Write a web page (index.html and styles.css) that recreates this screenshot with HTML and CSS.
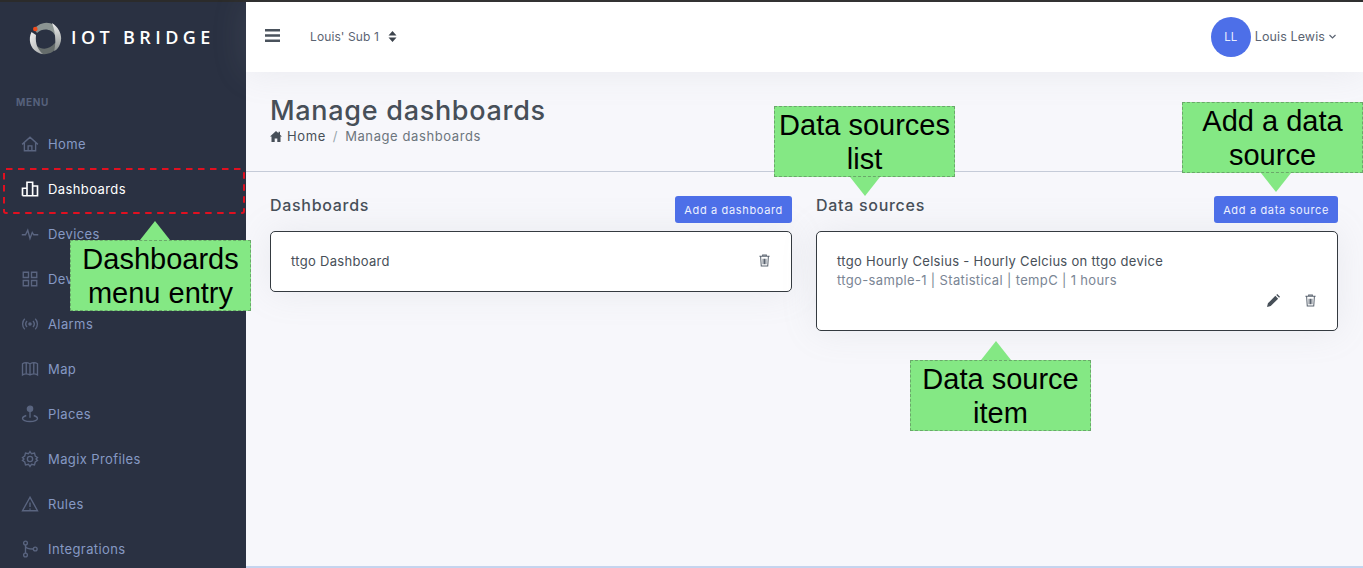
FILE: index.html
```html
<!DOCTYPE html>
<html lang="en">
<head>
  <meta charset="UTF-8" />
  <meta name="viewport" content="width=device-width, initial-scale=1.0"/>
  <title>Manage dashboards</title>
  <link rel="stylesheet" href="styles.css">
</head>
<body>

<div class="app">

  <aside class="sidebar">
    <div class="logo">
      <svg width="34" height="34" viewBox="0 0 34 34">
        <defs>
          <linearGradient id="ringRight" x1="0" y1="0" x2="0" y2="1">
            <stop offset="0" stop-color="#eeeeee"/>
            <stop offset="1" stop-color="#8a908e"/>
          </linearGradient>
          <linearGradient id="ringLeft" x1="0" y1="0" x2="1" y2="1">
            <stop offset="0" stop-color="#f2f2f2"/>
            <stop offset="1" stop-color="#a5a8a8"/>
          </linearGradient>
        </defs>
        <path d="M6 8C12 1 20 0 26 4 28 8 28 11 27 14 24 8 15 6 9 12Z" fill="#8b9492"/>
        <path d="M9 25C14 29 21 29 27 22 31 22 31 23 31 24 27 31 20 34 14 33 11 32 9 29 9 25Z" fill="#656c6b"/>
        <path d="M3.500 11C0 18 2 27 9 31 11 32 13 33 15 33 10 29 7 23 8 14Z" fill="url(#ringLeft)"/>
        <path d="M24 2C32 7 35 16 32 23 31 26 29 29 26 30 28 24 28 12 24 2Z" fill="url(#ringRight)"/>
        <circle cx="7.300" cy="8" r="2.300" fill="#f04a1a"/>
      </svg>
      <span class="logo-text">IOT BRIDGE</span>
    </div>

    <div class="menu-title">MENU</div>

    <ul class="menu">
      <li>
        <svg class="menu-icon" viewBox="0 0 24 24"><path d="M1.500 12.500 12 3l10.500 9.500M4.500 10.500V21h15V10.500M9.500 21v-6.500h5V21"/></svg>
        Home
      </li>
      <li class="active">
        <svg class="menu-icon" viewBox="0 0 24 24"><path d="M2 21V11h6v10M8 21V3h7.500v18M15.500 21V8H22v13zM2 21h20"/></svg>
        Dashboards
      </li>
      <li>
        <svg class="menu-icon" viewBox="0 0 24 24"><path d="M1 13h5l3-6 3 11 3-8 2 3h6"/></svg>
        Devices
      </li>
      <li>
        <svg class="menu-icon" viewBox="0 0 24 24"><path d="M3 3h7v7H3zM14 3h7v7h-7zM3 14h7v7H3zM14 14h7v7h-7z"/></svg>
        Dev
      </li>
      <li>
        <svg class="menu-icon" viewBox="0 0 24 24"><path d="M5 5a10 10 0 0 0 0 14M19 5a10 10 0 0 1 0 14M8 8a6 6 0 0 0 0 8M16 8a6 6 0 0 1 0 8"/><circle class="solid" cx="12" cy="12" r="1.500"/></svg>
        Alarms
      </li>
      <li>
        <svg class="menu-icon" viewBox="0 0 24 24"><path d="M2 5c3-2 6-2 10 0 4-2 7-2 10 0v15c-3-2-6-2-10 0-4-2-7-2-10 0zM12 5v15M7 4v15M17 4v15"/></svg>
        Map
      </li>
      <li>
        <svg class="menu-icon" viewBox="0 0 24 24"><circle class="solid" cx="12" cy="5" r="3.500"/><path d="M12 8v9M7 14c-3 1-5 2.500-5 4 0 2 4 4 10 4s10-2 10-4c0-1.500-2-3-5-4"/></svg>
        Places
      </li>
      <li>
        <svg class="menu-icon" viewBox="0 0 24 24"><path d="M12 2l2 3 4-1 1 4 3 2-2 2 2 2-3 2-1 4-4-1-2 3-2-3-4 1-1-4-3-2 2-2-2-2 3-2 1-4 4 1z"/><circle cx="12" cy="12" r="3.500"/></svg>
        Magix Profiles
      </li>
      <li>
        <svg class="menu-icon" viewBox="0 0 24 24"><path d="M12 3 2 21h20zM12 10v6M12 18v1.500"/></svg>
        Rules
      </li>
      <li>
        <svg class="menu-icon" viewBox="0 0 24 24"><circle cx="6" cy="4" r="2.500"/><circle cx="6" cy="20" r="2.500"/><circle cx="19" cy="12" r="2.500"/><path d="M6 6.500v11M6 8c0 3 3 4 10.500 4"/></svg>
        Integrations
      </li>
    </ul>
  </aside>

  <div class="content">

    <header class="topbar">
      <svg class="burger" width="15" height="13" viewBox="0 0 15 13"><path d="M0 1.200h15M0 6.500h15M0 11.800h15"/></svg>
      <div class="sub-select">
        Louis' Sub 1
        <svg width="9" height="11" viewBox="0 0 9 11"><path d="M4.500 0 8.500 4.500h-8zM4.500 11 .5 6.500h8z"/></svg>
      </div>
      <div class="user">
        <div class="avatar">LL</div>
        <span class="user-name">Louis Lewis</span>
        <svg class="caret" width="7" height="5" viewBox="0 0 7 5"><path d="M.5 1l3 3 3-3"/></svg>
      </div>
    </header>

    <section class="page-title">
      <h1>Manage dashboards</h1>
      <div class="breadcrumb">
        <svg width="12" height="11" viewBox="0 0 12 11"><path d="M6 0 0 5.500h1.500V11h3.200V7.500h2.600V11h3.200V5.500H12L10 3.700V.7H8.500v1.600z"/></svg>
        <span class="crumb">Home</span>
        <span class="sep">/</span>
        <span class="crumb-current">Manage dashboards</span>
      </div>
    </section>

    <main class="columns">
      <section>
        <div class="col-head">
          <h2>Dashboards</h2>
          <button class="btn">Add a dashboard</button>
        </div>
        <div class="card card-row">
          <div class="item-name">ttgo Dashboard</div>
          <svg class="action" viewBox="0 0 14 14"><path class="trash" d="M1.500 2.500h11M5 2.500V1h4v1.500M2.800 2.500l.7 10.500h7l.7-10.500M5.500 5v6M7 5v6M8.500 5v6"/></svg>
        </div>
      </section>
      <section>
        <div class="col-head">
          <h2>Data sources</h2>
          <button class="btn">Add a data source</button>
        </div>
        <div class="card">
          <div class="item-name">ttgo Hourly Celsius - Hourly Celcius on ttgo device</div>
          <div class="item-sub">ttgo-sample-1 | Statistical | tempC | 1 hours</div>
          <div class="item-actions">
            <svg class="action" viewBox="0 0 14 14"><path class="pencil" d="M0 14l1-4 8-8 3 3-8 8zM10 1l1-1 3 3-1 1z"/></svg>
            <svg class="action" viewBox="0 0 14 14"><path class="trash" d="M1.500 2.500h11M5 2.500V1h4v1.500M2.800 2.500l.7 10.500h7l.7-10.500M5.500 5v6M7 5v6M8.500 5v6"/></svg>
          </div>
        </div>
      </section>
    </main>

  </div>
</div>

<!-- Annotations over the screenshot -->
<svg class="highlight" width="242" height="46" viewBox="0 0 242 46"><rect x="1" y="1" width="240" height="44" rx="2"/></svg>

<div class="callout callout-menu">Dashboards menu entry</div>
<div class="callout callout-list">Data sources list</div>
<div class="callout callout-add">Add a data source</div>
<div class="callout callout-item">Data source item</div>

</body>
</html>
```

FILE: styles.css
```css
body {
  font-family: Inter, 'Noto Sans', sans-serif;
  margin: 0;
  padding: 0;
  height: 568px;
  overflow: hidden;
  position: relative;
  background: #f7f7fb;
}
.app {
  display: flex;
  height: 566px;
  border-top: 2px solid #2b2b2b;
}

/* Sidebar */
.sidebar {
  width: 246px;
  flex: none;
  background: #2a3142;
  overflow: hidden;
}
.logo {
  display: flex;
  align-items: center;
  gap: 9px;
  padding: 19px 0 0 28px;
}
.logo-text {
  color: #fff;
  font-family: 'Open Sans', sans-serif;
  font-weight: 600;
  font-size: 18px;
  letter-spacing: 4.4px;
  margin-bottom: 2px;
}
.menu-title {
  color: #56617c;
  font-size: 10px;
  font-weight: 700;
  letter-spacing: .7px;
  margin: 41px 0 0 16px;
}
.menu {
  list-style: none;
  margin: 13px 0 0;
  padding: 0;
}
.menu li {
  height: 45px;
  display: flex;
  align-items: center;
  gap: 9px;
  padding-left: 21px;
  font-size: 13px;
  letter-spacing: .4px;
  color: #8699c4;
}
.menu li.active {
  color: #fff;
}
.menu-icon {
  width: 18px;
  height: 18px;
  fill: none;
  stroke: #5a6580;
  stroke-width: 1.8;
}
.menu-icon .solid {
  fill: #5a6580;
}
.active .menu-icon {
  stroke: #fff;
  stroke-width: 2.2;
}

/* Top bar */
.content {
  flex: 1;
  min-width: 0;
  border-bottom: 2px solid #c5d4ee;
}
.topbar {
  height: 70px;
  background: #fff;
  display: flex;
  align-items: center;
  padding: 0 27px 0 19px;
  box-shadow: 0 0 35px rgba(154,161,171,.15);
  font-size: 12px;
  color: #5b6472;
}
.burger {
  fill: none;
  stroke: #4a525c;
  stroke-width: 2.4;
  margin-bottom: 3px;
}
.sub-select {
  margin-left: 30px;
  margin-bottom: 2px;
  display: flex;
  align-items: center;
  gap: 9px;
  letter-spacing: .1px;
}
.sub-select svg {
  fill: #3c434c;
}
.user {
  margin-left: auto;
  display: flex;
  align-items: center;
  gap: 4px;
}
.avatar {
  width: 40px;
  height: 40px;
  border-radius: 50%;
  background: #4d6fe8;
  color: #e8edff;
  display: flex;
  align-items: center;
  justify-content: center;
  font-size: 11.500px;
}
.user-name {
  font-size: 12.500px;
  letter-spacing: .1px;
  margin-bottom: 2px;
}
.caret {
  fill: none;
  stroke: #5b6472;
  stroke-width: 1.2;
  margin-bottom: 2px;
}

/* Page title */
.page-title {
  padding: 24px 24px 0;
  height: 75px;
  border-bottom: 1px solid #c5cbd8;
}
h1 {
  margin: 0;
  font-size: 27px;
  font-weight: 500;
  line-height: 30px;
  letter-spacing: .7px;
  color: #474f58;
}
.breadcrumb {
  display: flex;
  align-items: center;
  gap: 5px;
  font-size: 13px;
  letter-spacing: .6px;
  color: #474f58;
  margin-top: 2px;
}
.breadcrumb svg {
  fill: #474f58;
}
.sep {
  color: #98a6ad;
  margin: 0 2px;
}
.crumb-current {
  color: #6c757d;
}

/* Dashboards and data sources */
.columns {
  display: grid;
  grid-template-columns: 1fr 1fr;
  gap: 24px;
  padding: 24px 25px 0 24px;
}
.col-head {
  display: flex;
  justify-content: space-between;
  align-items: flex-start;
  margin-bottom: 8px;
}
h2 {
  margin: 0;
  font-size: 16px;
  font-weight: 500;
  line-height: 18px;
  letter-spacing: .7px;
  color: #474f58;
}
.btn {
  height: 27px;
  padding: 0 9px;
  background: #4d6fe8;
  color: #eef1ff;
  border: none;
  border-radius: 3px;
  font-family: inherit;
  font-size: 11px;
  letter-spacing: .65px;
}
.card {
  background: #fff;
  border: 1px solid #343a40;
  border-radius: 5px;
  padding: 21px 20px;
  height: 100px;
  box-sizing: border-box;
  box-shadow: 0 0 35px rgba(154,161,171,.15);
}
.card-row {
  height: 61px;
  padding: 20px 20px 22px;
  display: flex;
  align-items: center;
  justify-content: space-between;
}
.item-name {
  font-size: 13px;
  letter-spacing: .3px;
  color: #474f58;
}
.item-sub {
  font-size: 13px;
  letter-spacing: .35px;
  color: #7a8594;
  margin-top: 3px;
}
.item-actions {
  display: flex;
  justify-content: flex-end;
  gap: 24px;
  margin-top: 6px;
}
.action {
  width: 13px;
  height: 13px;
  flex: none;
}
.trash {
  fill: none;
  stroke: #5b6470;
  stroke-width: 1.100;
}
.pencil {
  fill: #474f58;
}

/* Annotations */
.highlight {
  position: absolute;
  left: 3px;
  top: 168px;
}
.highlight rect {
  fill: none;
  stroke: #e01020;
  stroke-width: 2;
  stroke-dasharray: 6.500 5.500;
}
.callout {
  position: absolute;
  width: 179px;
  height: 68px;
  padding-top: 1px;
  border: 1px dashed #6aa86a;
  background: #84e884;
  color: #000;
  font-family: 'Liberation Sans', sans-serif;
  font-size: 29px;
  line-height: 34px;
  text-align: center;
}
.callout::after {
  content: '';
  position: absolute;
  border-left: 15px solid transparent;
  border-right: 15px solid transparent;
}
.callout-menu {
  left: 70px;
  top: 240px;
}
.callout-menu::after {
  left: 69px;
  top: -20px;
  border-bottom: 19px solid #84e884;
}
.callout-list {
  left: 774px;
  top: 106px;
}
.callout-list::after {
  left: 75px;
  bottom: -20px;
  border-top: 19px solid #84e884;
}
.callout-add {
  left: 1182px;
  top: 102px;
}
.callout-add::after {
  left: 78px;
  bottom: -20px;
  border-top: 19px solid #84e884;
}
.callout-item {
  left: 910px;
  top: 360px;
}
.callout-item::after {
  left: 70px;
  top: -20px;
  border-bottom: 19px solid #84e884;
}
```
